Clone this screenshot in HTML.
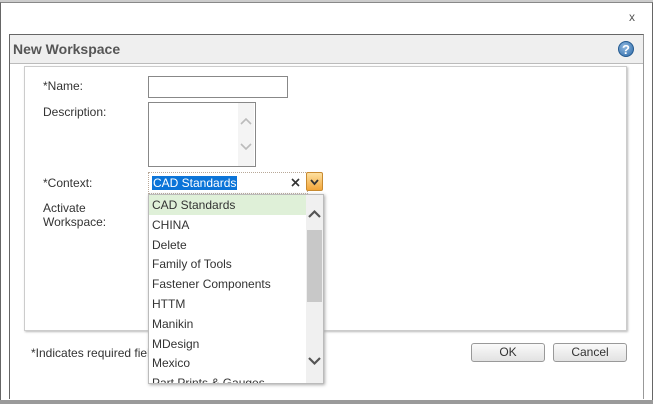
<!DOCTYPE html>
<html><head><style>
body{margin:0;width:653px;height:404px;overflow:hidden;background:#8a8a8a;font-family:"Liberation Sans",sans-serif;font-size:12px;color:#333;position:relative}
.a{position:absolute}
</style></head><body>
<div class="a" style="left:0;top:0;width:653px;height:2px;background:#ccc"></div>
<div class="a" style="left:0;top:2px;width:651px;height:397px;background:#fff;border:1px solid #666;border-top-color:#888"></div>
<div class="a" style="left:629px;top:10px;font-size:12px;color:#555">x</div>
<div class="a" style="left:9px;top:34px;width:633px;height:28px;background:#efefef;border:1px solid #666;border-bottom:1px solid #bbb;border-right:1px solid #999"></div>
<div class="a" style="left:9px;top:62px;width:633px;height:337px;border-left:1px solid #666;border-right:1px solid #999"></div>
<div class="a" style="left:13px;top:41px;font-size:14px;font-weight:bold;color:#555">New Workspace</div>
<div class="a" style="left:618px;top:41px;width:16px;height:16px;border-radius:50%;background:radial-gradient(circle at 40% 35%,#8fb8e0,#2d6aa8);color:#fff;font-weight:bold;font-size:13px;text-align:center;line-height:16px;border:1px solid #245a90;box-sizing:border-box">?</div>
<div class="a" style="left:24px;top:66px;width:601px;height:263px;border:1px solid #ccc;box-shadow:1px 1px 2px #bbb"></div>
<div class="a" style="left:43px;top:79px">*Name:</div>
<div class="a" style="left:148px;top:76px;width:138px;height:20px;border:1px solid #888"></div>
<div class="a" style="left:43px;top:105px">Description:</div>
<div class="a" style="left:148px;top:102px;width:106px;height:63px;border:1px solid #888"></div>
<div class="a" style="left:238px;top:103px;width:16px;height:63px;background:#f4f4f4"></div>
<svg class="a" style="left:238px;top:115px" width="16" height="40"><path d="M3 9 L8 4 L13 9 M3 29 L8 34 L13 29" stroke="#bbb" stroke-width="1.6" fill="none"/></svg>
<div class="a" style="left:43px;top:176px">*Context:</div>
<div class="a" style="left:148px;top:172px;width:158px;height:20px;border:1px dotted #b8a898"></div>
<div class="a" style="left:152px;top:176px;background:#0b74d8;color:#fff;padding:0 1px;line-height:14px">CAD Standards</div>
<svg class="a" style="left:291px;top:178px" width="10" height="10"><path d="M1 1 L8 8 M8 1 L1 8" stroke="#333" stroke-width="1.6"/></svg>
<div class="a" style="left:306px;top:172px;width:17px;height:19px;border:1px solid #c88a30;border-radius:2px;background:linear-gradient(#fde0a0,#f3a63a);box-sizing:border-box"></div>
<svg class="a" style="left:306px;top:172px" width="17" height="19"><path d="M5 8 L8.5 12 L12 8" stroke="#333" stroke-width="1.8" fill="none"/></svg>
<div class="a" style="left:43px;top:201px;line-height:14px">Activate<br>Workspace:</div>
<div class="a" style="left:31px;top:346px">*Indicates required fiel</div>
<div class="a" style="left:471px;top:343px;width:72px;height:17px;border:1px solid #999;border-radius:3px;background:linear-gradient(#fafafa,#e2e2e2);text-align:center;line-height:17px;color:#333">OK</div>
<div class="a" style="left:553px;top:343px;width:72px;height:17px;border:1px solid #999;border-radius:3px;background:linear-gradient(#fafafa,#e2e2e2);text-align:center;line-height:17px;color:#333">Cancel</div>
<div class="a" style="left:148px;top:194px;width:176px;height:190px;background:#fff;border:1px solid #bbb;box-shadow:1px 1px 3px #aaa;overflow:hidden;box-sizing:border-box">
<div style="position:absolute;left:0;top:0;width:157px;height:20px;background:#dff0d8"></div>
<div style="position:absolute;left:157px;top:0;width:18px;height:190px;background:#f0f0f0"></div>
<div style="position:absolute;left:158px;top:35px;width:15px;height:72px;background:#c8c8c8"></div>
<svg style="position:absolute;left:157px;top:13px" width="18" height="12"><path d="M3 9 L8.5 3.5 L14 9" stroke="#555" stroke-width="2.2" fill="none"/></svg>
<svg style="position:absolute;left:157px;top:160px" width="18" height="12"><path d="M3 3 L8.5 8.5 L14 3" stroke="#555" stroke-width="2.2" fill="none"/></svg>
<div style="position:absolute;left:3px;top:1px;line-height:19.8px;font-size:12px;color:#333">CAD Standards<br>CHINA<br>Delete<br>Family of Tools<br>Fastener Components<br>HTTM<br>Manikin<br>MDesign<br>Mexico<br>Part Prints &amp; Gauges</div>
</div>
<div class="a" style="left:0;top:400px;width:653px;height:4px;background:#9a9a9a"></div>
</body></html>
